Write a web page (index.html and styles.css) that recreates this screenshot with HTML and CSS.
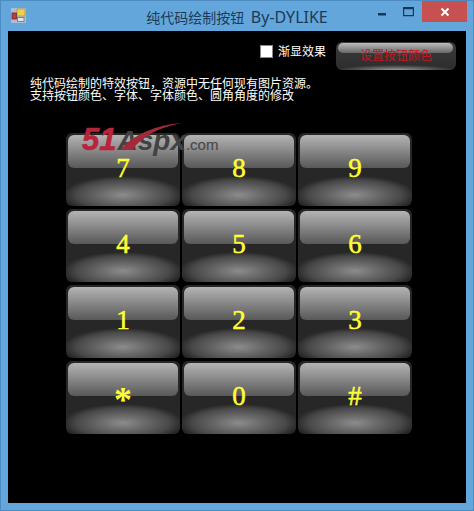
FILE: index.html
```html
<!DOCTYPE html>
<html lang="zh">
<head>
<meta charset="utf-8">
<title>纯代码绘制按钮 By-DYLIKE</title>
<link rel="stylesheet" href="styles.css">
</head>
<body>
<div class="window">
  <header class="titlebar">
    <svg class="app-icon" width="15" height="15" viewBox="0 0 15 15">
      <rect x="0" y="0" width="15" height="15" fill="#aebdd0"/>
      <rect x="6" y="1" width="8" height="7" fill="#f0d050" stroke="#b89a2a" stroke-width="0.8"/>
      <rect x="1" y="5" width="4.5" height="6" fill="#c23a36" stroke="#7c2a2a" stroke-width="0.8"/>
      <rect x="6.5" y="9.5" width="6.5" height="4" fill="#dfe6f0" stroke="#5f7796" stroke-width="0.8"/>
    </svg>
    <div class="title">纯代码绘制按钮 <span class="title-latin">By-DYLIKE</span></div>
    <div class="controls">
      <span class="ctl"><svg width="10" height="10" viewBox="0 0 10 10"><rect x="1" y="6" width="8" height="2.5" fill="#1c3550"/></svg></span>
      <span class="ctl"><svg width="11" height="10" viewBox="0 0 11 10"><path d="M0.6 0.6h9.8v8h-9.8z" fill="none" stroke="#1c3550" stroke-width="1.2"/><rect x="0" y="0" width="11" height="2.2" fill="#1c3550"/></svg></span>
      <span class="ctl close"><svg width="10" height="10" viewBox="0 0 10 10"><path d="M1.5 1.5l7 7M8.5 1.5l-7 7" stroke="#fff" stroke-width="2" fill="none"/></svg></span>
    </div>
  </header>
  <main class="client">
    <div class="toolbar">
      <label class="check"><span class="box"></span>渐显效果</label>
      <button class="color-btn"><span class="pill"></span><span class="color-label">设置按钮颜色</span></button>
    </div>
    <p class="desc">纯代码绘制的特效按钮，资源中无任何现有图片资源。<br>支持按钮颜色、字体、字体颜色、圆角角度的修改</p>
    <div class="keypad">
      <button class="key"><span>7</span></button>
      <button class="key"><span>8</span></button>
      <button class="key"><span>9</span></button>
      <button class="key"><span>4</span></button>
      <button class="key"><span>5</span></button>
      <button class="key"><span>6</span></button>
      <button class="key"><span>1</span></button>
      <button class="key"><span>2</span></button>
      <button class="key"><span>3</span></button>
      <button class="key"><span class="star">*</span></button>
      <button class="key"><span>0</span></button>
      <button class="key"><span>#</span></button>
      <div class="logo">
        <span class="l51">51</span><span class="lasp">Aspx</span><span class="lcom">.com</span>
        <svg class="swoosh" width="64" height="28" viewBox="0 0 64 28"><path d="M0 28C14 12 36 3 62 1C40 5 22 14 12 28Z" fill="#a32a3a"/></svg>
      </div>
    </div>
  </main>
</div>
</body>
</html>
```
FILE: styles.css
```css
* { box-sizing: border-box; }
html, body { margin: 0; padding: 0; background: #000; }
.window {
  width: 474px; height: 511px;
  background: #62a6dc;
  border: 1px solid #4d8cc0;
  padding: 0 7px 7px;
  display: flex; flex-direction: column;
  font-family: "Noto Sans CJK SC", "Noto Sans", sans-serif;
  overflow: hidden;
}
.titlebar { height: 30px; flex: none; position: relative; display: flex; }
.app-icon { margin: 7px 0 0 3px; }
.title {
  position: absolute; left: 0; right: 0; top: 6px;
  text-align: center; font-size: 14px; line-height: 20px;
  font-family: "Noto Sans", "Noto Sans CJK SC", sans-serif;
  color: #1f3a58;
  word-spacing: 3px;
}
.title-latin { font-size: 16px; }
.controls { margin-left: auto; display: flex; height: 21px; margin-right: -1px; }
.ctl { width: 26px; display: flex; align-items: center; justify-content: center; padding-top: 1px; }
.ctl.close { width: 45px; background: #c75050; margin-left: 1px; padding-top: 0; }
.client { flex: 1; background: #000; color: #fff; padding: 11px 10px 0 22px; position: relative; }
.toolbar { display: flex; justify-content: flex-end; align-items: flex-start; height: 28px; }
.check { display: flex; align-items: center; gap: 5px; font-size: 12px; line-height: 14px; margin: 2px 10px 0 0; color: #fff; }
.box { width: 13px; height: 13px; background: #fff; border: 1px solid #8a8a8a; }
.color-btn {
  width: 120px; height: 28px; padding: 6px 0 0; border: 0; position: relative;
  display: flex; flex-direction: column; align-items: center; justify-content: flex-start;
  border-radius: 6px; font: inherit;
  background:
    radial-gradient(ellipse 50% 5px at 50% 100%, #9a9a9a, rgba(120,120,120,0) 100%),
    linear-gradient(#3c3c3c, #2c2c2c);
}
.pill {
  position: absolute; left: 2px; right: 3px; top: 1px; height: 10px; border-radius: 5px;
  background: linear-gradient(#bcbcbc, #666);
}
.color-label { position: relative; display: block; font-size: 12px; line-height: 14px; color: #c4161f; }
.desc { margin: 7px 0 0; font-size: 12px; line-height: 12px; color: #fff; }
.keypad {
  position: relative;
  margin: 32px 0 0 36px;
  display: grid; grid-template-columns: repeat(3, 114px); grid-auto-rows: 73px;
  column-gap: 2px; row-gap: 3px;
}
.key {
  position: relative; padding: 0; border: 0; border-radius: 6px; overflow: hidden;
  font: inherit;
  background:
    radial-gradient(ellipse 60px 19px at 50% 62px, #8c8c8c 0%, #686868 40%, #484848 78%, rgba(39,39,39,0) 100%),
    #272727;
}
.key::before {
  content: ""; position: absolute; left: 2px; right: 2px; top: 2px; height: 33px;
  border-radius: 6px;
  background: linear-gradient(#b4b4b4, #585858);
}
.key span {
  position: absolute; left: 0; right: 0; top: 20px;
  font-family: "Liberation Serif", serif; font-weight: normal;
  font-size: 27px; line-height: 30px; color: #ffff33; text-align: center;
  -webkit-text-stroke: 0.5px #ffff33;
}
.key .star { font-weight: bold; font-size: 36px; top: 24px; -webkit-text-stroke: 0; }
.logo {
  position: absolute; left: 16px; top: -11px; height: 36px; width: 140px;
  font-family: "Liberation Sans", sans-serif; white-space: nowrap;
  display: flex; align-items: baseline;
}
.swoosh { position: absolute; left: 38px; top: 0; }
.l51 { font-size: 31px; font-weight: bold; font-style: italic; color: #b8243c; line-height: 36px; -webkit-text-stroke: 0.6px #b8243c; }
.lasp { font-size: 28px; font-weight: bold; font-style: italic; color: #424242; line-height: 36px; margin-left: 1px; }
.lcom { font-size: 15px; color: #4a4a4a; line-height: 36px; margin-left: 0; -webkit-text-stroke: 0.2px #4a4a4a; }
```
